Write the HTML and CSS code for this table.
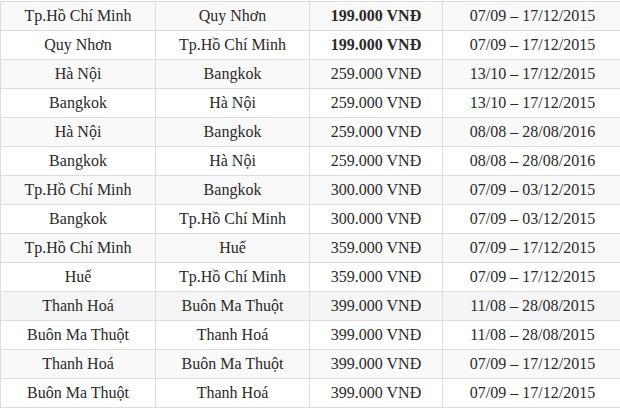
FILE: index.html
```html
<!DOCTYPE html>
<html lang="vi">
<head>
<meta charset="utf-8">
<link rel="stylesheet" href="styles.css">
</head>
<body>
<table class="fares">
  <colgroup>
    <col class="c1"><col class="c2"><col class="c3"><col class="c4">
  </colgroup>
  <tbody>
    <tr><td>Tp.Hồ Chí Minh</td><td>Quy Nhơn</td><td class="strong">199.000 VNĐ</td><td>07/09 – 17/12/2015</td></tr>
    <tr><td>Quy Nhơn</td><td>Tp.Hồ Chí Minh</td><td class="strong">199.000 VNĐ</td><td>07/09 – 17/12/2015</td></tr>
    <tr><td>Hà Nội</td><td>Bangkok</td><td>259.000 VNĐ</td><td>13/10 – 17/12/2015</td></tr>
    <tr><td>Bangkok</td><td>Hà Nội</td><td>259.000 VNĐ</td><td>13/10 – 17/12/2015</td></tr>
    <tr><td>Hà Nội</td><td>Bangkok</td><td>259.000 VNĐ</td><td>08/08 – 28/08/2016</td></tr>
    <tr><td>Bangkok</td><td>Hà Nội</td><td>259.000 VNĐ</td><td>08/08 – 28/08/2016</td></tr>
    <tr><td>Tp.Hồ Chí Minh</td><td>Bangkok</td><td>300.000 VNĐ</td><td>07/09 – 03/12/2015</td></tr>
    <tr><td>Bangkok</td><td>Tp.Hồ Chí Minh</td><td>300.000 VNĐ</td><td>07/09 – 03/12/2015</td></tr>
    <tr><td>Tp.Hồ Chí Minh</td><td>Huế</td><td>359.000 VNĐ</td><td>07/09 – 17/12/2015</td></tr>
    <tr><td>Huế</td><td>Tp.Hồ Chí Minh</td><td>359.000 VNĐ</td><td>07/09 – 17/12/2015</td></tr>
    <tr class="hover"><td>Thanh Hoá</td><td>Buôn Ma Thuột</td><td>399.000 VNĐ</td><td>11/08 – 28/08/2015</td></tr>
    <tr><td>Buôn Ma Thuột</td><td>Thanh Hoá</td><td>399.000 VNĐ</td><td>11/08 – 28/08/2015</td></tr>
    <tr><td>Thanh Hoá</td><td>Buôn Ma Thuột</td><td>399.000 VNĐ</td><td>07/09 – 17/12/2015</td></tr>
    <tr><td>Buôn Ma Thuột</td><td>Thanh Hoá</td><td>399.000 VNĐ</td><td>07/09 – 17/12/2015</td></tr>
  </tbody>
</table>
</body>
</html>
```

FILE: styles.css
```css
html, body {
  margin: 0;
  padding: 0;
  background: #fff;
  overflow: hidden;
}
body {
  padding-top: 1px;
}
.fares {
  border-collapse: collapse;
  table-layout: fixed;
  width: 622px;
  font-family: "Liberation Serif", "Times New Roman", serif;
  font-size: 16px;
  color: #2a2a2a;
}
.c1 { width: 155px; }
.c2 { width: 154px; }
.c3 { width: 133px; }
.c4 { width: 180px; }
.fares td {
  border: 1px solid #ddd;
  padding: 4px 0;
  line-height: 20px;
  text-align: center;
  white-space: nowrap;
}
.fares tr:nth-child(odd) {
  background: #f9f9f9;
}
.fares tr.hover {
  background: #f5f5f5;
}
.strong {
  font-weight: bold;
}
```
